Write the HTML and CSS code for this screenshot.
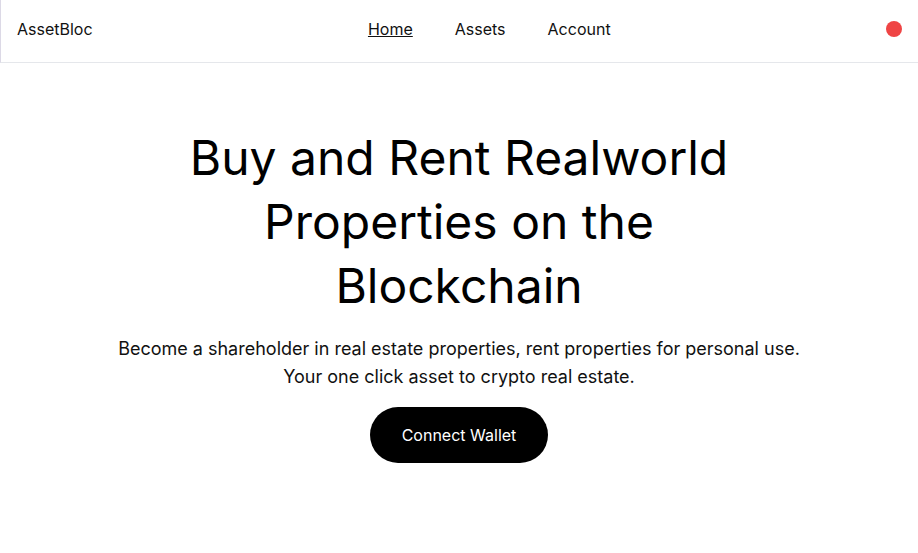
FILE: index.html
```html
<!DOCTYPE html>
<html lang="en">
<head>
<meta charset="utf-8">
<title>AssetBloc</title>
<link rel="stylesheet" href="styles.css">
</head>
<body>
<header class="topbar">
  <div class="logo">AssetBloc</div>
  <nav class="nav">
    <a class="nav-link active" href="#">Home</a>
    <a class="nav-link" href="#">Assets</a>
    <a class="nav-link" href="#">Account</a>
  </nav>
  <span class="status-dot"></span>
</header>
<main class="hero">
  <h1 class="hero-title">Buy and Rent Realworld Properties on the Blockchain</h1>
  <p class="hero-text">Become a shareholder in real estate properties, rent properties for personal use.<br>Your one click asset to crypto real estate.</p>
  <button class="cta">Connect Wallet</button>
</main>
</body>
</html>
```
FILE: styles.css
```css
* { box-sizing: border-box; }
html, body { margin: 0; padding: 0; background: #fff; }
body {
  font-family: Inter, "Noto Sans", sans-serif;
  color: #000;
}
.topbar {
  height: 63px;
  display: flex;
  justify-content: space-between;
  align-items: center;
  padding: 0 16px 4px;
  border-left: 1px solid #dcd9e6;
  border-bottom: 1px solid #e5e7eb;
}
.logo {
  font-size: 16px;
  line-height: 24px;
  color: #111;
}
.nav {
  display: flex;
  gap: 42px;
  font-size: 16px;
  line-height: 24px;
}
.nav-link {
  color: #111;
  text-decoration: none;
}
.nav-link.active { text-decoration: underline; }
.status-dot {
  width: 16px;
  height: 16px;
  border-radius: 50%;
  background: #ef4444;
}
.hero {
  display: flex;
  flex-direction: column;
  align-items: center;
  text-align: center;
  padding-top: 63px;
}
.hero-title {
  margin: 0;
  max-width: 576px;
  font-size: 48px;
  line-height: 64px;
  font-weight: 400;
}
.hero-text {
  margin: 17px 0 0;
  font-size: 18px;
  line-height: 28px;
  color: #111;
}
.cta {
  margin-top: 16px;
  background: #000;
  color: #fff;
  border: none;
  border-radius: 9999px;
  padding: 16px 32px;
  font-family: inherit;
  font-size: 16px;
  line-height: 24px;
  cursor: pointer;
}
```
